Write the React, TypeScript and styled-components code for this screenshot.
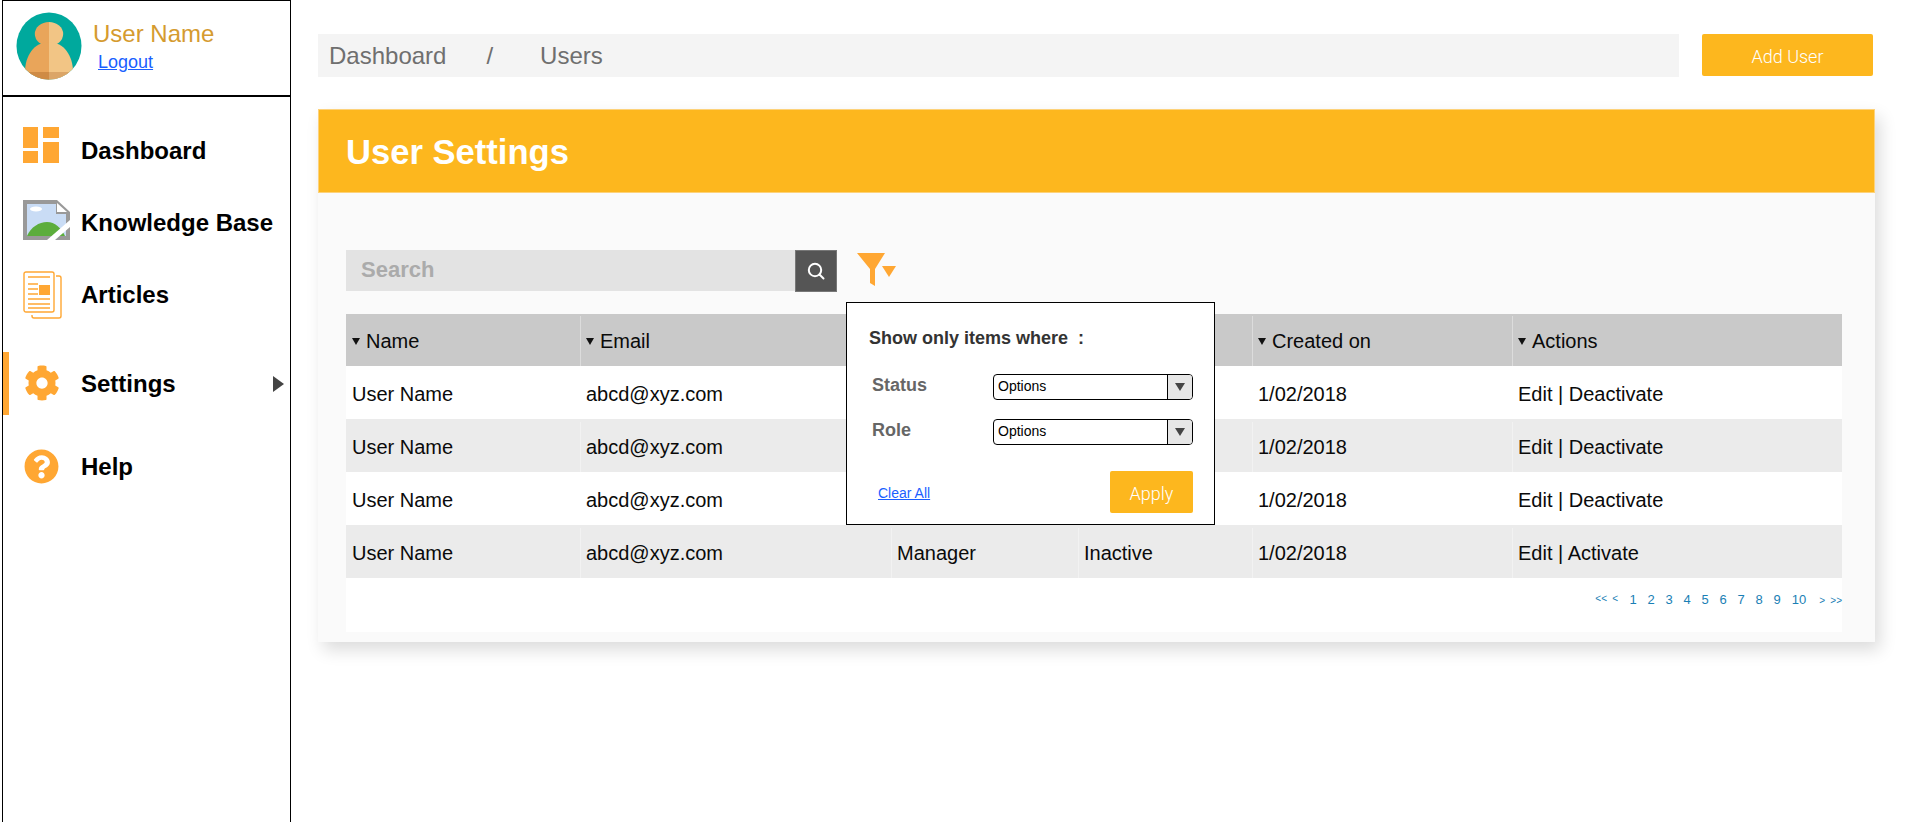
import React from "react";
import styled, { createGlobalStyle } from "styled-components";
import { FaCog, FaQuestionCircle } from "react-icons/fa";

const ORANGE = "#ffa733";
const AMBER = "#fdb71e";

const Global = createGlobalStyle`
  html, body { margin: 0; padding: 0; background: #fff; }
  body { font-family: "Liberation Sans", Arial, sans-serif; color: #111; overflow: hidden; }
  * { box-sizing: border-box; }
`;

const Page = styled.div`
  display: flex;
  height: 822px;
  width: 1920px;
`;

const Sidebar = styled.aside`
  width: 289px;
  margin-left: 2px;
  height: 822px;
  border-left: 1px solid #000;
  border-right: 1px solid #000;
  border-top: 1px solid #000;
  flex: none;
`;

const Profile = styled.div`
  display: flex;
  align-items: flex-start;
  height: 96px;
  padding: 11px 0 0 13px;
  border-bottom: 2px solid #000;
`;

const Avatar = styled.svg`
  width: 66px;
  height: 68px;
  flex: none;
`;

const ProfileText = styled.div`
  margin-left: 11px;
  padding-top: 8px;
`;

const ProfileName = styled.div`
  font-size: 24px;
  line-height: 28px;
  color: #d59b2f;
`;

const LogoutLink = styled.a`
  display: block;
  margin: 3px 0 0 5px;
  font-size: 18px;
  line-height: 22px;
  color: #1a5fff;
  text-decoration: underline;
`;

const Nav = styled.nav`
  display: flex;
  flex-direction: column;
  padding-top: 18px;
`;

const NavItem = styled.div<{ $h: number; $top?: number; $active?: boolean }>`
  display: flex;
  align-items: center;
  height: ${(p) => p.$h}px;
  margin-top: ${(p) => p.$top ?? 0}px;
  border-left: 6px solid ${(p) => (p.$active ? ORANGE : "transparent")};
  font-size: 24px;
  font-weight: 700;
  color: #000;
`;

const IconSlot = styled.span<{ $left: number; $dy: number }>`
  display: flex;
  width: 72px;
  flex: none;
  padding-left: ${(p) => p.$left}px;
  margin-top: ${(p) => p.$dy}px;
  color: ${ORANGE};
  svg { display: block; }
`;

const NavLabel = styled.span`
  flex: 1;
`;

const Chevron = styled.span`
  width: 0;
  height: 0;
  margin-right: 6px;
  border-left: 11px solid #444;
  border-top: 8px solid transparent;
  border-bottom: 8px solid transparent;
`;

const Main = styled.main`
  width: 1557px;
  margin-left: 27px;
  padding-top: 34px;
  flex: none;
`;

const TopBar = styled.div`
  display: flex;
  align-items: flex-start;
  height: 43px;
`;

const Breadcrumb = styled.div`
  display: flex;
  align-items: center;
  width: 1361px;
  height: 43px;
  padding-left: 11px;
  background: #f4f4f4;
  color: #6f6f6f;
  font-size: 24px;
`;

const Slash = styled.span`
  margin: 0 47px 0 40px;
`;

const AddButton = styled.button`
  width: 171px;
  height: 42px;
  margin-left: 23px;
  padding-top: 4px;
  border: 0;
  border-radius: 2px;
  background: ${AMBER};
  color: #fff;
  font-family: Roboto, sans-serif;
  font-size: 18px;
  font-weight: 300;
`;

const Card = styled.section`
  margin-top: 32px;
  background: #fafafa;
  box-shadow: 5px 8px 16px rgba(0, 0, 0, 0.14);
  height: 533px;
`;

const Banner = styled.header`
  display: flex;
  align-items: center;
  height: 84px;
  padding: 2px 0 0 27px;
  background: ${AMBER};
  border: 1px solid #fdd27a;
  color: #fff;
  font-size: 34.6px;
  font-weight: 700;
`;

const Content = styled.div`
  position: relative;
  padding: 57px 33px 10px 28px;
`;

const Toolbar = styled.div`
  display: flex;
  align-items: flex-start;
  height: 41px;
  margin-bottom: 23px;
`;

const SearchField = styled.div`
  display: flex;
  align-items: center;
  width: 449px;
  height: 41px;
  padding: 0 0 2px 15px;
  background: #e3e3e3;
  color: #ababab;
  font-size: 22px;
  font-weight: 700;
`;

const SearchButton = styled.button`
  display: flex;
  align-items: center;
  justify-content: center;
  width: 42px;
  height: 42px;
  padding: 0;
  border: 1px solid #777;
  background: #555;
`;

const FilterIcon = styled.svg`
  margin: 2px 0 0 20px;
  width: 40px;
  height: 34px;
`;

const Row = styled.div<{ $kind: "head" | "odd" | "even" }>`
  display: grid;
  grid-template-columns: 234px 311px 187px 174px 260px 329px;
  height: ${(p) => (p.$kind === "head" ? 52 : 53)}px;
  padding-top: ${(p) => (p.$kind === "head" ? 2 : 3)}px;
  font-size: 20px;
  color: #0a0a0a;
  background: ${(p) =>
    p.$kind === "head" ? "#c9c9c9" : p.$kind === "even" ? "#ebebeb" : "#fff"};
`;

const Cell = styled.div<{ $divider?: boolean }>`
  display: flex;
  align-items: center;
  padding-left: 5px;
  border-left: 1px solid ${(p) => (p.$divider ? "rgba(255,255,255,0.35)" : "transparent")};
`;

const Caret = styled.span`
  width: 0;
  height: 0;
  margin: 0 6px 0 0;
  border-top: 7px solid #111;
  border-left: 4px solid transparent;
  border-right: 4px solid transparent;
`;

const Pagination = styled.div`
  display: flex;
  justify-content: flex-end;
  align-items: flex-start;
  height: 54px;
  padding-top: 13px;
  background: #fff;
  color: #1a7fb5;
  font-size: 13px;
  line-height: 18px;
`;

const PageNum = styled.span<{ $wide?: boolean; $lead?: boolean }>`
  width: ${(p) => (p.$wide ? 26 : 18)}px;
  margin-left: ${(p) => (p.$lead ? 6 : 0)}px;
  text-align: center;
`;

const PageArrow = styled.span<{ $w: number; $mt: number }>`
  width: ${(p) => p.$w}px;
  margin-top: ${(p) => p.$mt}px;
  font-size: 10px;
  text-align: right;
  white-space: nowrap;
`;

const Popover = styled.div`
  position: absolute;
  left: 528px;
  top: 109px;
  width: 369px;
  height: 223px;
  padding: 24px 21px 0 22px;
  background: #fff;
  border: 1px solid #000;
`;

const PopTitle = styled.div`
  font-size: 18px;
  line-height: 22px;
  font-weight: 700;
  color: #333;
  white-space: pre;
`;

const FilterRow = styled.div<{ $top: number }>`
  display: flex;
  align-items: center;
  justify-content: space-between;
  height: 26px;
  margin-top: ${(p) => p.$top}px;
`;

const FilterLabel = styled.div`
  padding-left: 3px;
  margin-top: -4px;
  font-size: 18px;
  font-weight: 700;
  color: #666;
`;

const SelectBox = styled.div`
  display: flex;
  width: 200px;
  height: 26px;
  border: 1px solid #000;
  border-radius: 4px;
  overflow: hidden;
  background: #fff;
  font-size: 14px;
  color: #000;
`;

const SelectText = styled.div`
  flex: 1;
  display: flex;
  align-items: center;
  padding: 0 0 2px 4px;
`;

const SelectArrow = styled.div`
  display: flex;
  align-items: center;
  justify-content: center;
  width: 25px;
  background: #e6e6e6;
  border-left: 1px solid #000;
  &::after {
    content: "";
    border-top: 8px solid #444;
    border-left: 5px solid transparent;
    border-right: 5px solid transparent;
  }
`;

const PopFooter = styled.div`
  display: flex;
  align-items: center;
  justify-content: space-between;
  margin-top: 26px;
  padding-left: 9px;
`;

const ClearLink = styled.a`
  margin-top: 2px;
  font-size: 14px;
  color: #1a5fff;
  text-decoration: underline;
`;

const ApplyButton = styled.button`
  width: 83px;
  height: 42px;
  padding-top: 3px;
  border: 0;
  border-radius: 2px;
  background: ${AMBER};
  color: #fff;
  font-family: Roboto, sans-serif;
  font-size: 18px;
  font-weight: 300;
`;

const heads = ["Name", "Email", "Role", "Status", "Created on", "Actions"];
const rows = [
  ["User Name", "abcd@xyz.com", "Manager", "Active", "1/02/2018", "Edit | Deactivate"],
  ["User Name", "abcd@xyz.com", "Manager", "Active", "1/02/2018", "Edit | Deactivate"],
  ["User Name", "abcd@xyz.com", "Manager", "Active", "1/02/2018", "Edit | Deactivate"],
  ["User Name", "abcd@xyz.com", "Manager", "Inactive", "1/02/2018", "Edit | Activate"],
];

const AvatarArt = () => (
  <Avatar viewBox="0 0 66 68">
    <defs>
      <clipPath id="av"><ellipse cx="33" cy="34" rx="32.5" ry="33.5" /></clipPath>
    </defs>
    <ellipse cx="33" cy="34" rx="32.5" ry="33.5" fill="#00a99d" />
    <g clipPath="url(#av)">
      <path d="M33 10a13 11 0 0 0 0 24z" fill="#e9a55a" />
      <path d="M33 10a13 11 0 0 1 0 24z" fill="#f2c585" />
      <path d="M33 30C18 30 9 44 9 60v8h24z" fill="#e9a55a" />
      <path d="M33 30c15 0 24 14 24 30v8H33z" fill="#f2c585" />
      <rect x="9" y="60" width="24" height="8" fill="#cf8b45" />
      <rect x="33" y="60" width="24" height="8" fill="#dba567" />
    </g>
  </Avatar>
);

const DashboardIcon = () => (
  <svg width="36" height="36" viewBox="0 0 36 36" fill={ORANGE}>
    <rect x="0" y="0" width="15" height="21" />
    <rect x="0" y="24" width="15" height="12" />
    <rect x="20" y="0" width="16" height="11" />
    <rect x="20" y="15" width="16" height="21" />
  </svg>
);

const KnowledgeIcon = () => (
  <svg width="47" height="40" viewBox="0 0 47 40">
    <path d="M0 0h34l13 12v28H0z" fill="#999" />
    <path d="M4 4h29v10h10v22H4z" fill="#c9dcf5" />
    <path d="M34 3l10 9H34z" fill="#fff" />
    <ellipse cx="13" cy="9" rx="6" ry="2.5" fill="#fff" />
    <path d="M4 36c4-9 12-14 20-14s14 6 18 14z" fill="#5cad3c" />
    <path d="M24 40l23-20v7L32 40z" fill="#fff" />
  </svg>
);

const ArticlesIcon = () => (
  <svg width="39" height="48" viewBox="0 0 39 48" fill="none" stroke={ORANGE} strokeWidth="1.4">
    <rect x="1" y="1" width="30" height="40" rx="2" />
    <path d="M33 5h3a2 2 0 0 1 2 2v38a2 2 0 0 1-2 2H11a2 2 0 0 1-2-2v-1" />
    <path d="M5 6h22M5 13h10M5 18h10M5 23h10M5 28h22M5 33h22M5 37h22" strokeWidth="1.6" />
    <rect x="16" y="14" width="11" height="10" fill={ORANGE} stroke="none" />
  </svg>
);

const SearchGlyph = () => (
  <svg width="18" height="18" viewBox="0 0 18 18" fill="none" stroke="#fff" strokeWidth="2">
    <circle cx="8" cy="8" r="6.2" />
    <path d="M12.5 12.5l4 4" strokeLinecap="round" />
  </svg>
);

export default function App() {
  return (
    <>
      <Global />
      <Page>
        <Sidebar>
          <Profile>
            <AvatarArt />
            <ProfileText>
              <ProfileName>User Name</ProfileName>
              <LogoutLink href="#">Logout</LogoutLink>
            </ProfileText>
          </Profile>
          <Nav>
            <NavItem $h={72}>
              <IconSlot $left={14} $dy={-12}><DashboardIcon /></IconSlot>
              <NavLabel>Dashboard</NavLabel>
            </NavItem>
            <NavItem $h={72}>
              <IconSlot $left={14} $dy={-6}><KnowledgeIcon /></IconSlot>
              <NavLabel>Knowledge Base</NavLabel>
            </NavItem>
            <NavItem $h={72}>
              <IconSlot $left={14} $dy={0}><ArticlesIcon /></IconSlot>
              <NavLabel>Articles</NavLabel>
            </NavItem>
            <NavItem $h={63} $top={21} $active>
              <IconSlot $left={15} $dy={-2}><FaCog size={36} /></IconSlot>
              <NavLabel>Settings</NavLabel>
              <Chevron />
            </NavItem>
            <NavItem $h={72} $top={16}>
              <IconSlot $left={15} $dy={-2}><FaQuestionCircle size={35} /></IconSlot>
              <NavLabel>Help</NavLabel>
            </NavItem>
          </Nav>
        </Sidebar>
        <Main>
          <TopBar>
            <Breadcrumb>
              <span>Dashboard</span>
              <Slash>/</Slash>
              <span>Users</span>
            </Breadcrumb>
            <AddButton>Add User</AddButton>
          </TopBar>
          <Card>
            <Banner>User Settings</Banner>
            <Content>
              <Toolbar>
                <SearchField>Search</SearchField>
                <SearchButton><SearchGlyph /></SearchButton>
                <FilterIcon viewBox="0 0 40 34">
                  <path d="M0 1h28L18 17v17l-5-3V17z" fill={ORANGE} />
                  <path d="M25 14h14l-7 11z" fill={ORANGE} />
                </FilterIcon>
              </Toolbar>
              <Row $kind="head">
                {heads.map((h, i) => (
                  <Cell key={h} $divider={i > 0}><Caret />{h}</Cell>
                ))}
              </Row>
              {rows.map((r, i) => (
                <Row key={i} $kind={i % 2 ? "even" : "odd"}>
                  {r.map((c, j) => (
                    <Cell key={j} $divider={i % 2 === 1 && j > 0}>{c}</Cell>
                  ))}
                </Row>
              ))}
              <Pagination>
                <PageArrow $w={12} $mt={-1}>&lt;&lt;</PageArrow>
                <PageArrow $w={11} $mt={-1}>&lt;</PageArrow>
                <PageNum $lead>1</PageNum>
                {[2, 3, 4, 5, 6, 7, 8, 9].map((n) => (
                  <PageNum key={n}>{n}</PageNum>
                ))}
                <PageNum $wide>10</PageNum>
                <PageArrow $w={13} $mt={1}>&gt;</PageArrow>
                <PageArrow $w={17} $mt={1}>&gt;&gt;</PageArrow>
              </Pagination>
              <Popover>
                <PopTitle>Show only items where  :</PopTitle>
                <FilterRow $top={25}>
                  <FilterLabel>Status</FilterLabel>
                  <SelectBox><SelectText>Options</SelectText><SelectArrow /></SelectBox>
                </FilterRow>
                <FilterRow $top={19}>
                  <FilterLabel>Role</FilterLabel>
                  <SelectBox><SelectText>Options</SelectText><SelectArrow /></SelectBox>
                </FilterRow>
                <PopFooter>
                  <ClearLink href="#">Clear All</ClearLink>
                  <ApplyButton>Apply</ApplyButton>
                </PopFooter>
              </Popover>
            </Content>
          </Card>
        </Main>
      </Page>
    </>
  );
}
